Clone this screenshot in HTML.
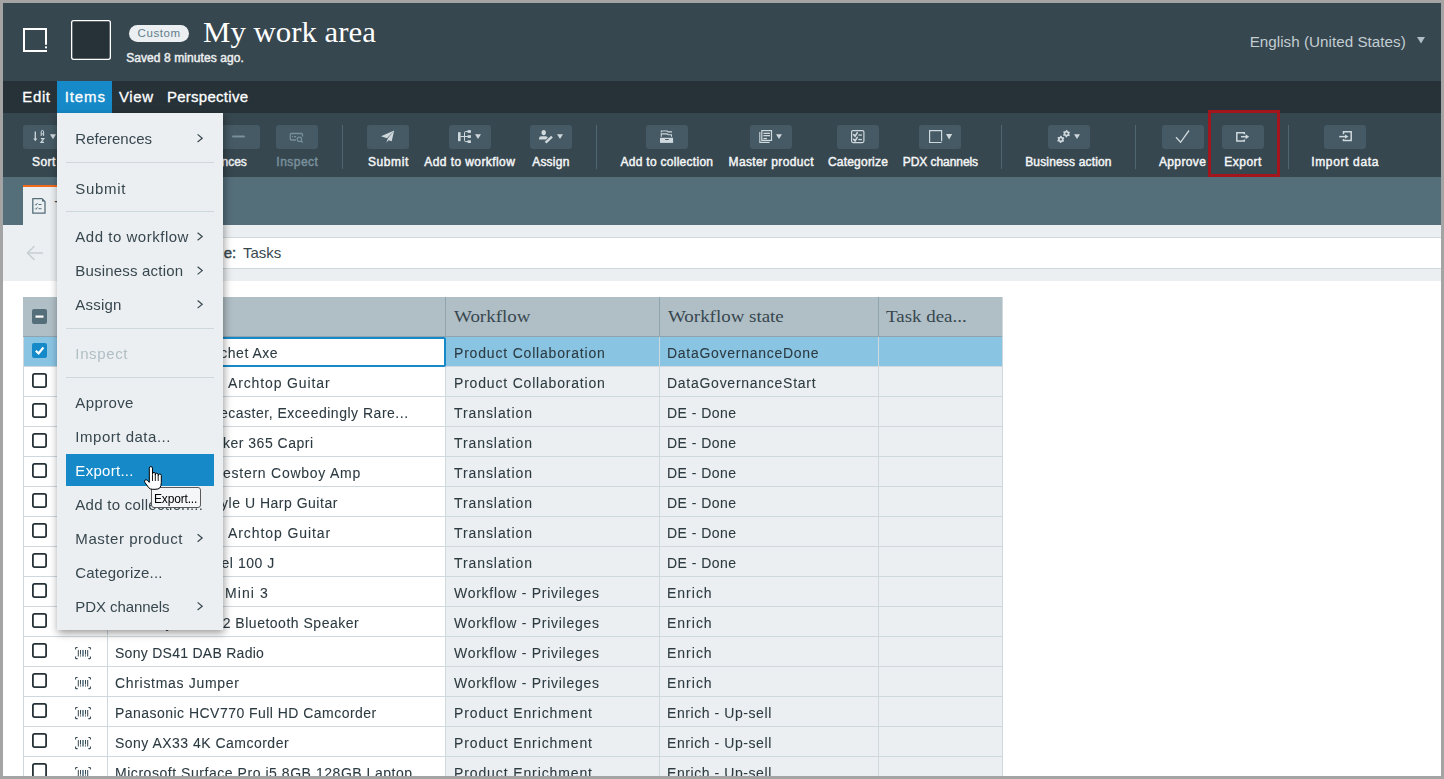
<!DOCTYPE html>
<html><head><meta charset="utf-8"><title>My work area</title>
<style>
html,body{margin:0;padding:0;}
body{width:1444px;height:779px;overflow:hidden;position:relative;background:#a4a4a4;font-family:"Liberation Sans",sans-serif;}
.r{position:absolute;}
.t{position:absolute;white-space:nowrap;line-height:1;}
.ov{position:absolute;left:0;top:0;}
</style></head><body>
<div class='r' style='left:3px;top:3px;width:1438px;height:78px;background:#37474f;'></div><div class='r' style='left:129px;top:25px;width:60px;height:17px;background:#eceff1;border-radius:9px'></div><div class='r' style='left:3px;top:81px;width:1438px;height:32px;background:#263238;'></div><div class='r' style='left:57px;top:81px;width:55px;height:32px;background:#168ac9;'></div><div class='r' style='left:3px;top:113px;width:1438px;height:64px;background:#37474f;'></div><div class='r' style='left:23px;top:125px;width:42px;height:24px;background:#455a64;border-radius:3px'></div><div class='r' style='left:218px;top:125px;width:42px;height:24px;background:#455a64;border-radius:3px'></div><div class='r' style='left:276px;top:125px;width:42px;height:24px;background:#455a64;border-radius:3px'></div><div class='r' style='left:367px;top:125px;width:42px;height:24px;background:#455a64;border-radius:3px'></div><div class='r' style='left:449px;top:125px;width:42px;height:24px;background:#455a64;border-radius:3px'></div><div class='r' style='left:530px;top:125px;width:42px;height:24px;background:#455a64;border-radius:3px'></div><div class='r' style='left:646px;top:125px;width:42px;height:24px;background:#455a64;border-radius:3px'></div><div class='r' style='left:750px;top:125px;width:42px;height:24px;background:#455a64;border-radius:3px'></div><div class='r' style='left:837px;top:125px;width:42px;height:24px;background:#455a64;border-radius:3px'></div><div class='r' style='left:919px;top:125px;width:42px;height:24px;background:#455a64;border-radius:3px'></div><div class='r' style='left:1048px;top:125px;width:42px;height:24px;background:#455a64;border-radius:3px'></div><div class='r' style='left:1162px;top:125px;width:42px;height:24px;background:#455a64;border-radius:3px'></div><div class='r' style='left:1222px;top:125px;width:42px;height:24px;background:#455a64;border-radius:3px'></div><div class='r' style='left:1324px;top:125px;width:42px;height:24px;background:#455a64;border-radius:3px'></div><div class='r' style='left:342px;top:125px;width:1px;height:44px;background:#4f6570;'></div><div class='r' style='left:596px;top:125px;width:1px;height:44px;background:#4f6570;'></div><div class='r' style='left:1001px;top:125px;width:1px;height:44px;background:#4f6570;'></div><div class='r' style='left:1135px;top:125px;width:1px;height:44px;background:#4f6570;'></div><div class='r' style='left:1288px;top:125px;width:1px;height:44px;background:#4f6570;'></div><div class='r' style='left:1208px;top:110px;width:72px;height:67px;background:transparent;border:3px solid #a3151d;box-sizing:border-box'></div><div class='r' style='left:3px;top:177px;width:1438px;height:48px;background:#546e7a;'></div><div class='r' style='left:23px;top:185px;width:177px;height:40px;background:#eceff1;border-top:2px solid #f26a1b;box-sizing:border-box'></div><div class='r' style='left:3px;top:225px;width:1438px;height:56px;background:#eceff1;'></div><div class='r' style='left:60px;top:237px;width:1381px;height:32px;background:#ffffff;border-top:1px solid #cfd8dc;border-bottom:1px solid #cfd8dc;box-sizing:border-box'></div><div class='r' style='left:3px;top:281px;width:1438px;height:495px;background:#ffffff;'></div><div class='r' style='left:23px;top:297px;width:980px;height:40px;background:#b0bec5;border-bottom:1px solid #90a4ae;box-sizing:border-box'></div><div class='r' style='left:107px;top:297px;width:1px;height:40px;background:#90a4ae;'></div><div class='r' style='left:445px;top:297px;width:1px;height:40px;background:#90a4ae;'></div><div class='r' style='left:659px;top:297px;width:1px;height:40px;background:#90a4ae;'></div><div class='r' style='left:878px;top:297px;width:1px;height:40px;background:#90a4ae;'></div><div class='r' style='left:23px;top:337px;width:980px;height:30px;background:#89c4e3;border-bottom:1px solid #cfd8dc;box-sizing:border-box'></div><div class='r' style='left:107px;top:337px;width:339px;height:30px;background:#ffffff;border:2px solid #168ac9;border-radius:2px;box-sizing:border-box'></div><div class='r' style='left:23px;top:367px;width:422px;height:30px;background:#ffffff;border-bottom:1px solid #cfd8dc;box-sizing:border-box'></div><div class='r' style='left:445px;top:367px;width:558px;height:30px;background:#eceff1;border-bottom:1px solid #cfd8dc;box-sizing:border-box'></div><div class='r' style='left:23px;top:397px;width:422px;height:30px;background:#ffffff;border-bottom:1px solid #cfd8dc;box-sizing:border-box'></div><div class='r' style='left:445px;top:397px;width:558px;height:30px;background:#eceff1;border-bottom:1px solid #cfd8dc;box-sizing:border-box'></div><div class='r' style='left:23px;top:427px;width:422px;height:30px;background:#ffffff;border-bottom:1px solid #cfd8dc;box-sizing:border-box'></div><div class='r' style='left:445px;top:427px;width:558px;height:30px;background:#eceff1;border-bottom:1px solid #cfd8dc;box-sizing:border-box'></div><div class='r' style='left:23px;top:457px;width:422px;height:30px;background:#ffffff;border-bottom:1px solid #cfd8dc;box-sizing:border-box'></div><div class='r' style='left:445px;top:457px;width:558px;height:30px;background:#eceff1;border-bottom:1px solid #cfd8dc;box-sizing:border-box'></div><div class='r' style='left:23px;top:487px;width:422px;height:30px;background:#ffffff;border-bottom:1px solid #cfd8dc;box-sizing:border-box'></div><div class='r' style='left:445px;top:487px;width:558px;height:30px;background:#eceff1;border-bottom:1px solid #cfd8dc;box-sizing:border-box'></div><div class='r' style='left:23px;top:517px;width:422px;height:30px;background:#ffffff;border-bottom:1px solid #cfd8dc;box-sizing:border-box'></div><div class='r' style='left:445px;top:517px;width:558px;height:30px;background:#eceff1;border-bottom:1px solid #cfd8dc;box-sizing:border-box'></div><div class='r' style='left:23px;top:547px;width:422px;height:30px;background:#ffffff;border-bottom:1px solid #cfd8dc;box-sizing:border-box'></div><div class='r' style='left:445px;top:547px;width:558px;height:30px;background:#eceff1;border-bottom:1px solid #cfd8dc;box-sizing:border-box'></div><div class='r' style='left:23px;top:577px;width:422px;height:30px;background:#ffffff;border-bottom:1px solid #cfd8dc;box-sizing:border-box'></div><div class='r' style='left:445px;top:577px;width:558px;height:30px;background:#eceff1;border-bottom:1px solid #cfd8dc;box-sizing:border-box'></div><div class='r' style='left:23px;top:607px;width:422px;height:30px;background:#ffffff;border-bottom:1px solid #cfd8dc;box-sizing:border-box'></div><div class='r' style='left:445px;top:607px;width:558px;height:30px;background:#eceff1;border-bottom:1px solid #cfd8dc;box-sizing:border-box'></div><div class='r' style='left:23px;top:637px;width:422px;height:30px;background:#ffffff;border-bottom:1px solid #cfd8dc;box-sizing:border-box'></div><div class='r' style='left:445px;top:637px;width:558px;height:30px;background:#eceff1;border-bottom:1px solid #cfd8dc;box-sizing:border-box'></div><div class='r' style='left:23px;top:667px;width:422px;height:30px;background:#ffffff;border-bottom:1px solid #cfd8dc;box-sizing:border-box'></div><div class='r' style='left:445px;top:667px;width:558px;height:30px;background:#eceff1;border-bottom:1px solid #cfd8dc;box-sizing:border-box'></div><div class='r' style='left:23px;top:697px;width:422px;height:30px;background:#ffffff;border-bottom:1px solid #cfd8dc;box-sizing:border-box'></div><div class='r' style='left:445px;top:697px;width:558px;height:30px;background:#eceff1;border-bottom:1px solid #cfd8dc;box-sizing:border-box'></div><div class='r' style='left:23px;top:727px;width:422px;height:30px;background:#ffffff;border-bottom:1px solid #cfd8dc;box-sizing:border-box'></div><div class='r' style='left:445px;top:727px;width:558px;height:30px;background:#eceff1;border-bottom:1px solid #cfd8dc;box-sizing:border-box'></div><div class='r' style='left:23px;top:757px;width:422px;height:30px;background:#ffffff;border-bottom:1px solid #cfd8dc;box-sizing:border-box'></div><div class='r' style='left:445px;top:757px;width:558px;height:30px;background:#eceff1;border-bottom:1px solid #cfd8dc;box-sizing:border-box'></div><div class='r' style='left:23px;top:337px;width:1px;height:439px;background:#cfd8dc;'></div><div class='r' style='left:107px;top:367px;width:1px;height:409px;background:#cfd8dc;'></div><div class='r' style='left:445px;top:367px;width:1px;height:409px;background:#cfd8dc;'></div><div class='r' style='left:659px;top:337px;width:1px;height:439px;background:#cfd8dc;'></div><div class='r' style='left:878px;top:337px;width:1px;height:439px;background:#cfd8dc;'></div><div class='r' style='left:1002px;top:297px;width:1px;height:479px;background:#cfd8dc;'></div>
<div class='t' style='left:137.59px;top:27.77px;font-family:"Liberation Sans",sans-serif;font-size:11.5px;font-weight:400;color:#607d8b;letter-spacing:0.597px'>Custom</div><div class='t' style='left:203.06px;top:18.73px;font-family:"Liberation Serif",serif;font-size:28.5px;font-weight:400;color:#ffffff;letter-spacing:0.000px;transform:scaleX(1.0813);transform-origin:0 0'>My work area</div><div class='t' style='left:126.16px;top:51.94px;font-family:"Liberation Sans",sans-serif;font-size:12px;font-weight:400;color:#eceff1;letter-spacing:0.084px;-webkit-text-stroke:0.45px #eceff1'>Saved 8 minutes ago.</div><div class='t' style='left:1249.64px;top:33.73px;font-family:"Liberation Sans",sans-serif;font-size:15.2px;font-weight:400;color:#c3ced3;letter-spacing:0.036px'>English (United States)</div><div class='t' style='left:22.35px;top:89.30px;font-family:"Liberation Sans",sans-serif;font-size:15px;font-weight:400;color:#ffffff;letter-spacing:0.614px;-webkit-text-stroke:0.3px #ffffff'>Edit</div><div class='t' style='left:64.65px;top:89.30px;font-family:"Liberation Sans",sans-serif;font-size:15px;font-weight:400;color:#ffffff;letter-spacing:0.928px;-webkit-text-stroke:0.3px #ffffff'>Items</div><div class='t' style='left:118.95px;top:89.30px;font-family:"Liberation Sans",sans-serif;font-size:15px;font-weight:400;color:#ffffff;letter-spacing:0.617px;-webkit-text-stroke:0.3px #ffffff'>View</div><div class='t' style='left:166.95px;top:89.30px;font-family:"Liberation Sans",sans-serif;font-size:15px;font-weight:400;color:#ffffff;letter-spacing:0.272px;-webkit-text-stroke:0.3px #ffffff'>Perspective</div><div class='t' style='left:32.06px;top:155.94px;font-family:"Liberation Sans",sans-serif;font-size:12px;font-weight:400;color:#f3f5f6;letter-spacing:0.388px;-webkit-text-stroke:0.45px #f3f5f6'>Sort</div><div class='t' style='left:276.36px;top:155.94px;font-family:"Liberation Sans",sans-serif;font-size:12px;font-weight:400;color:#78909c;letter-spacing:0.463px;-webkit-text-stroke:0.45px #78909c'>Inspect</div><div class='t' style='left:368.06px;top:155.94px;font-family:"Liberation Sans",sans-serif;font-size:12px;font-weight:400;color:#f3f5f6;letter-spacing:0.564px;-webkit-text-stroke:0.45px #f3f5f6'>Submit</div><div class='t' style='left:424.36px;top:155.94px;font-family:"Liberation Sans",sans-serif;font-size:12px;font-weight:400;color:#f3f5f6;letter-spacing:0.413px;-webkit-text-stroke:0.45px #f3f5f6'>Add to workflow</div><div class='t' style='left:532.16px;top:155.94px;font-family:"Liberation Sans",sans-serif;font-size:12px;font-weight:400;color:#f3f5f6;letter-spacing:0.230px;-webkit-text-stroke:0.45px #f3f5f6'>Assign</div><div class='t' style='left:620.46px;top:155.94px;font-family:"Liberation Sans",sans-serif;font-size:12px;font-weight:400;color:#f3f5f6;letter-spacing:0.282px;-webkit-text-stroke:0.45px #f3f5f6'>Add to collection</div><div class='t' style='left:728.56px;top:155.94px;font-family:"Liberation Sans",sans-serif;font-size:12px;font-weight:400;color:#f3f5f6;letter-spacing:0.379px;-webkit-text-stroke:0.45px #f3f5f6'>Master product</div><div class='t' style='left:827.96px;top:155.94px;font-family:"Liberation Sans",sans-serif;font-size:12px;font-weight:400;color:#f3f5f6;letter-spacing:0.205px;-webkit-text-stroke:0.45px #f3f5f6'>Categorize</div><div class='t' style='left:902.76px;top:155.94px;font-family:"Liberation Sans",sans-serif;font-size:12px;font-weight:400;color:#f3f5f6;letter-spacing:-0.061px;-webkit-text-stroke:0.45px #f3f5f6'>PDX channels</div><div class='t' style='left:1025.16px;top:155.94px;font-family:"Liberation Sans",sans-serif;font-size:12px;font-weight:400;color:#f3f5f6;letter-spacing:0.167px;-webkit-text-stroke:0.45px #f3f5f6'>Business action</div><div class='t' style='left:1158.96px;top:155.94px;font-family:"Liberation Sans",sans-serif;font-size:12px;font-weight:400;color:#f3f5f6;letter-spacing:0.363px;-webkit-text-stroke:0.45px #f3f5f6'>Approve</div><div class='t' style='left:1224.16px;top:155.94px;font-family:"Liberation Sans",sans-serif;font-size:12px;font-weight:400;color:#f3f5f6;letter-spacing:0.519px;-webkit-text-stroke:0.45px #f3f5f6'>Export</div><div class='t' style='left:1311.16px;top:155.94px;font-family:"Liberation Sans",sans-serif;font-size:12px;font-weight:400;color:#f3f5f6;letter-spacing:0.658px;-webkit-text-stroke:0.45px #f3f5f6'>Import data</div><div class='t' style='left:185.47px;top:155.94px;font-family:"Liberation Sans",sans-serif;font-size:12px;font-weight:400;color:#eceff1;letter-spacing:0.000px;-webkit-text-stroke:0.45px #eceff1'>References</div><div class='t' style='left:223.63px;top:245.30px;font-family:"Liberation Sans",sans-serif;font-size:15px;font-weight:400;color:#3c4b53;letter-spacing:0.000px;-webkit-text-stroke:0.45px #3c4b53'>e:</div><div class='t' style='left:243.05px;top:245.30px;font-family:"Liberation Sans",sans-serif;font-size:15px;font-weight:400;color:#37474f;letter-spacing:-0.011px'>Tasks</div><div class='t' style='left:54.45px;top:198.30px;font-family:"Liberation Sans",sans-serif;font-size:15px;font-weight:400;color:#37474f;letter-spacing:0.000px'>Tasks</div><div class='t' style='left:453.95px;top:308.14px;font-family:"Liberation Serif",serif;font-size:17.5px;font-weight:400;color:#37474f;letter-spacing:0.000px;transform:scaleX(1.0839);transform-origin:0 0'>Workflow</div><div class='t' style='left:668.15px;top:308.14px;font-family:"Liberation Serif",serif;font-size:17.5px;font-weight:400;color:#37474f;letter-spacing:0.000px;transform:scaleX(1.0821);transform-origin:0 0'>Workflow state</div><div class='t' style='left:886.45px;top:308.14px;font-family:"Liberation Serif",serif;font-size:17.5px;font-weight:400;color:#37474f;letter-spacing:0.000px;transform:scaleX(1.0825);transform-origin:0 0'>Task dea...</div><div class='t' style='left:196.69px;top:346.25px;font-family:"Liberation Sans",sans-serif;font-size:14px;font-weight:400;color:#2c3a41;letter-spacing:0.509px;will-change:transform;-webkit-text-stroke:0.08px #2c3a41'>Hatchet Axe</div><div class='t' style='left:453.52px;top:346.25px;font-family:"Liberation Sans",sans-serif;font-size:14px;font-weight:400;color:#2c3a41;letter-spacing:0.811px;will-change:transform;-webkit-text-stroke:0.08px #2c3a41'>Product Collaboration</div><div class='t' style='left:667.42px;top:346.25px;font-family:"Liberation Sans",sans-serif;font-size:14px;font-weight:400;color:#2c3a41;letter-spacing:0.726px;will-change:transform;-webkit-text-stroke:0.08px #2c3a41'>DataGovernanceDone</div><div class='t' style='left:228.42px;top:376.25px;font-family:"Liberation Sans",sans-serif;font-size:14px;font-weight:400;color:#2c3a41;letter-spacing:0.869px;will-change:transform;-webkit-text-stroke:0.08px #2c3a41'>Archtop Guitar</div><div class='t' style='left:453.52px;top:376.25px;font-family:"Liberation Sans",sans-serif;font-size:14px;font-weight:400;color:#2c3a41;letter-spacing:0.811px;will-change:transform;-webkit-text-stroke:0.08px #2c3a41'>Product Collaboration</div><div class='t' style='left:667.42px;top:376.25px;font-family:"Liberation Sans",sans-serif;font-size:14px;font-weight:400;color:#2c3a41;letter-spacing:0.731px;will-change:transform;-webkit-text-stroke:0.08px #2c3a41'>DataGovernanceStart</div><div class='t' style='left:148.66px;top:406.25px;font-family:"Liberation Sans",sans-serif;font-size:14px;font-weight:400;color:#2c3a41;letter-spacing:0.509px;will-change:transform;-webkit-text-stroke:0.08px #2c3a41'>Fender Telecaster, Exceedingly Rare...</div><div class='t' style='left:453.52px;top:406.25px;font-family:"Liberation Sans",sans-serif;font-size:14px;font-weight:400;color:#2c3a41;letter-spacing:0.921px;will-change:transform;-webkit-text-stroke:0.08px #2c3a41'>Translation</div><div class='t' style='left:667.42px;top:406.25px;font-family:"Liberation Sans",sans-serif;font-size:14px;font-weight:400;color:#2c3a41;letter-spacing:0.450px;will-change:transform;-webkit-text-stroke:0.08px #2c3a41'>DE - Done</div><div class='t' style='left:153.19px;top:436.25px;font-family:"Liberation Sans",sans-serif;font-size:14px;font-weight:400;color:#2c3a41;letter-spacing:0.509px;will-change:transform;-webkit-text-stroke:0.08px #2c3a41'>Rickenbacker 365 Capri</div><div class='t' style='left:453.52px;top:436.25px;font-family:"Liberation Sans",sans-serif;font-size:14px;font-weight:400;color:#2c3a41;letter-spacing:0.921px;will-change:transform;-webkit-text-stroke:0.08px #2c3a41'>Translation</div><div class='t' style='left:667.42px;top:436.25px;font-family:"Liberation Sans",sans-serif;font-size:14px;font-weight:400;color:#2c3a41;letter-spacing:0.450px;will-change:transform;-webkit-text-stroke:0.08px #2c3a41'>DE - Done</div><div class='t' style='left:223.22px;top:466.25px;font-family:"Liberation Sans",sans-serif;font-size:14px;font-weight:400;color:#2c3a41;letter-spacing:0.748px;will-change:transform;-webkit-text-stroke:0.08px #2c3a41'>estern Cowboy Amp</div><div class='t' style='left:453.52px;top:466.25px;font-family:"Liberation Sans",sans-serif;font-size:14px;font-weight:400;color:#2c3a41;letter-spacing:0.921px;will-change:transform;-webkit-text-stroke:0.08px #2c3a41'>Translation</div><div class='t' style='left:667.42px;top:466.25px;font-family:"Liberation Sans",sans-serif;font-size:14px;font-weight:400;color:#2c3a41;letter-spacing:0.450px;will-change:transform;-webkit-text-stroke:0.08px #2c3a41'>DE - Done</div><div class='t' style='left:155.44px;top:496.25px;font-family:"Liberation Sans",sans-serif;font-size:14px;font-weight:400;color:#2c3a41;letter-spacing:0.509px;will-change:transform;-webkit-text-stroke:0.08px #2c3a41'>Gibson Style U Harp Guitar</div><div class='t' style='left:453.52px;top:496.25px;font-family:"Liberation Sans",sans-serif;font-size:14px;font-weight:400;color:#2c3a41;letter-spacing:0.921px;will-change:transform;-webkit-text-stroke:0.08px #2c3a41'>Translation</div><div class='t' style='left:667.42px;top:496.25px;font-family:"Liberation Sans",sans-serif;font-size:14px;font-weight:400;color:#2c3a41;letter-spacing:0.450px;will-change:transform;-webkit-text-stroke:0.08px #2c3a41'>DE - Done</div><div class='t' style='left:228.32px;top:526.25px;font-family:"Liberation Sans",sans-serif;font-size:14px;font-weight:400;color:#2c3a41;letter-spacing:0.907px;will-change:transform;-webkit-text-stroke:0.08px #2c3a41'>Archtop Guitar</div><div class='t' style='left:453.52px;top:526.25px;font-family:"Liberation Sans",sans-serif;font-size:14px;font-weight:400;color:#2c3a41;letter-spacing:0.921px;will-change:transform;-webkit-text-stroke:0.08px #2c3a41'>Translation</div><div class='t' style='left:667.42px;top:526.25px;font-family:"Liberation Sans",sans-serif;font-size:14px;font-weight:400;color:#2c3a41;letter-spacing:0.450px;will-change:transform;-webkit-text-stroke:0.08px #2c3a41'>DE - Done</div><div class='t' style='left:140.50px;top:556.25px;font-family:"Liberation Sans",sans-serif;font-size:14px;font-weight:400;color:#2c3a41;letter-spacing:0.509px;will-change:transform;-webkit-text-stroke:0.08px #2c3a41'>Fender Model 100 J</div><div class='t' style='left:453.52px;top:556.25px;font-family:"Liberation Sans",sans-serif;font-size:14px;font-weight:400;color:#2c3a41;letter-spacing:0.921px;will-change:transform;-webkit-text-stroke:0.08px #2c3a41'>Translation</div><div class='t' style='left:667.42px;top:556.25px;font-family:"Liberation Sans",sans-serif;font-size:14px;font-weight:400;color:#2c3a41;letter-spacing:0.450px;will-change:transform;-webkit-text-stroke:0.08px #2c3a41'>DE - Done</div><div class='t' style='left:225.32px;top:586.25px;font-family:"Liberation Sans",sans-serif;font-size:14px;font-weight:400;color:#2c3a41;letter-spacing:1.080px;will-change:transform;-webkit-text-stroke:0.08px #2c3a41'>Mini 3</div><div class='t' style='left:453.52px;top:586.25px;font-family:"Liberation Sans",sans-serif;font-size:14px;font-weight:400;color:#2c3a41;letter-spacing:0.726px;will-change:transform;-webkit-text-stroke:0.08px #2c3a41'>Workflow - Privileges</div><div class='t' style='left:667.42px;top:586.25px;font-family:"Liberation Sans",sans-serif;font-size:14px;font-weight:400;color:#2c3a41;letter-spacing:0.995px;will-change:transform;-webkit-text-stroke:0.08px #2c3a41'>Enrich</div><div class='t' style='left:138.57px;top:616.25px;font-family:"Liberation Sans",sans-serif;font-size:14px;font-weight:400;color:#2c3a41;letter-spacing:0.509px;will-change:transform;-webkit-text-stroke:0.08px #2c3a41'>Sony SRS-X2 Bluetooth Speaker</div><div class='t' style='left:453.52px;top:616.25px;font-family:"Liberation Sans",sans-serif;font-size:14px;font-weight:400;color:#2c3a41;letter-spacing:0.726px;will-change:transform;-webkit-text-stroke:0.08px #2c3a41'>Workflow - Privileges</div><div class='t' style='left:667.42px;top:616.25px;font-family:"Liberation Sans",sans-serif;font-size:14px;font-weight:400;color:#2c3a41;letter-spacing:0.995px;will-change:transform;-webkit-text-stroke:0.08px #2c3a41'>Enrich</div><div class='t' style='left:115.42px;top:646.25px;font-family:"Liberation Sans",sans-serif;font-size:14px;font-weight:400;color:#2c3a41;letter-spacing:0.272px;will-change:transform;-webkit-text-stroke:0.08px #2c3a41'>Sony DS41 DAB Radio</div><div class='t' style='left:453.52px;top:646.25px;font-family:"Liberation Sans",sans-serif;font-size:14px;font-weight:400;color:#2c3a41;letter-spacing:0.726px;will-change:transform;-webkit-text-stroke:0.08px #2c3a41'>Workflow - Privileges</div><div class='t' style='left:667.42px;top:646.25px;font-family:"Liberation Sans",sans-serif;font-size:14px;font-weight:400;color:#2c3a41;letter-spacing:0.995px;will-change:transform;-webkit-text-stroke:0.08px #2c3a41'>Enrich</div><div class='t' style='left:115.42px;top:676.25px;font-family:"Liberation Sans",sans-serif;font-size:14px;font-weight:400;color:#2c3a41;letter-spacing:0.684px;will-change:transform;-webkit-text-stroke:0.08px #2c3a41'>Christmas Jumper</div><div class='t' style='left:453.52px;top:676.25px;font-family:"Liberation Sans",sans-serif;font-size:14px;font-weight:400;color:#2c3a41;letter-spacing:0.726px;will-change:transform;-webkit-text-stroke:0.08px #2c3a41'>Workflow - Privileges</div><div class='t' style='left:667.42px;top:676.25px;font-family:"Liberation Sans",sans-serif;font-size:14px;font-weight:400;color:#2c3a41;letter-spacing:0.995px;will-change:transform;-webkit-text-stroke:0.08px #2c3a41'>Enrich</div><div class='t' style='left:115.42px;top:706.25px;font-family:"Liberation Sans",sans-serif;font-size:14px;font-weight:400;color:#2c3a41;letter-spacing:0.466px;will-change:transform;-webkit-text-stroke:0.08px #2c3a41'>Panasonic HCV770 Full HD Camcorder</div><div class='t' style='left:453.52px;top:706.25px;font-family:"Liberation Sans",sans-serif;font-size:14px;font-weight:400;color:#2c3a41;letter-spacing:0.883px;will-change:transform;-webkit-text-stroke:0.08px #2c3a41'>Product Enrichment</div><div class='t' style='left:667.42px;top:706.25px;font-family:"Liberation Sans",sans-serif;font-size:14px;font-weight:400;color:#2c3a41;letter-spacing:0.570px;will-change:transform;-webkit-text-stroke:0.08px #2c3a41'>Enrich - Up-sell</div><div class='t' style='left:115.42px;top:736.25px;font-family:"Liberation Sans",sans-serif;font-size:14px;font-weight:400;color:#2c3a41;letter-spacing:0.483px;will-change:transform;-webkit-text-stroke:0.08px #2c3a41'>Sony AX33 4K Camcorder</div><div class='t' style='left:453.52px;top:736.25px;font-family:"Liberation Sans",sans-serif;font-size:14px;font-weight:400;color:#2c3a41;letter-spacing:0.883px;will-change:transform;-webkit-text-stroke:0.08px #2c3a41'>Product Enrichment</div><div class='t' style='left:667.42px;top:736.25px;font-family:"Liberation Sans",sans-serif;font-size:14px;font-weight:400;color:#2c3a41;letter-spacing:0.570px;will-change:transform;-webkit-text-stroke:0.08px #2c3a41'>Enrich - Up-sell</div><div class='t' style='left:115.42px;top:766.25px;font-family:"Liberation Sans",sans-serif;font-size:14px;font-weight:400;color:#2c3a41;letter-spacing:0.542px;will-change:transform;-webkit-text-stroke:0.08px #2c3a41'>Microsoft Surface Pro i5 8GB 128GB Laptop</div><div class='t' style='left:453.52px;top:766.25px;font-family:"Liberation Sans",sans-serif;font-size:14px;font-weight:400;color:#2c3a41;letter-spacing:0.883px;will-change:transform;-webkit-text-stroke:0.08px #2c3a41'>Product Enrichment</div><div class='t' style='left:667.42px;top:766.25px;font-family:"Liberation Sans",sans-serif;font-size:14px;font-weight:400;color:#2c3a41;letter-spacing:0.570px;will-change:transform;-webkit-text-stroke:0.08px #2c3a41'>Enrich - Up-sell</div>
<svg class='ov' width='1444' height='779' viewBox='0 0 1444 779'><path d='M46 44.7V29H24V51H47' fill='none' stroke='#fff' stroke-width='2'/><rect x='45' y='46.4' width='2' height='1.9' fill='#fff'/><rect x='71.65' y='20.65' width='38.7' height='38.7' rx='2' fill='#263238' stroke='#fff' stroke-width='1.3'/><path d='M1417 37H1425L1421.0 43.5Z' fill='#b0bec5'/><path d='M35.3 131.4V140' stroke='#cfd8dc' stroke-width='1.3'/><path d='M33.3 138.6H37.3L35.3 141.2Z' fill='#cfd8dc'/><path d='M41.2 136V132Q41.2 130.4 42.4 130.4Q43.6 130.4 43.6 132V136 M41.2 133.9H43.6' fill='none' stroke='#cfd8dc' stroke-width='1'/><path d='M40.9 138.6H43.8L41 142.4H44' fill='none' stroke='#cfd8dc' stroke-width='1.2'/><path d='M50 134.2H56L53.0 139.2Z' fill='#cfd8dc'/><rect x='232' y='135.5' width='13' height='2' rx='1' fill='#78909c'/><path d='M302.5 136.5V134.5Q302.5 133.5 301.5 133.5H291.3Q290.3 133.5 290.3 134.5V139Q290.3 140 291.3 140H296' fill='none' stroke='#78909c' stroke-width='1.3'/><circle cx='299.4' cy='139.3' r='2.2' fill='none' stroke='#78909c' stroke-width='1.2'/><path d='M301 141L302.8 142.6' stroke='#78909c' stroke-width='1.3'/><rect x='292' y='136' width='1' height='1.3' fill='#78909c'/><rect x='294' y='136' width='2.2' height='1.3' fill='#78909c'/><path d='M394.2 130.6L381 136.3L387 138.2Z M394.2 130.6L387.8 138.6L386.3 142.8L388.6 140.2L391.7 141.2Z' fill='#cfd8dc'/><rect x='458' y='132.2' width='2.6' height='9' fill='#cfd8dc'/><path d='M460.5 136.5H468 M468 131.5H465.8Q464.5 131.5 464.5 132.8V140.3Q464.5 141.6 465.8 141.6H468' fill='none' stroke='#cfd8dc' stroke-width='1'/><rect x='467.6' y='130.1' width='3.3' height='2.8' fill='#cfd8dc'/><rect x='467.6' y='135.2' width='3.3' height='2.7' fill='#cfd8dc'/><rect x='467.6' y='140.3' width='3.3' height='2.7' fill='#cfd8dc'/><path d='M475 134.2H481L478.0 139.1Z' fill='#cfd8dc'/><ellipse cx='543.7' cy='132.6' rx='2.2' ry='2.7' fill='#cfd8dc'/><path d='M539 139.6V138.3Q539 136.4 541.5 136.3H545.6Q547.6 136.4 547.8 137.6L546 139.6Z' fill='#cfd8dc'/><path d='M545.6 142.6L552 136.6' stroke='#cfd8dc' stroke-width='2.4'/><path d='M557 134.2H563L560.0 139.1Z' fill='#cfd8dc'/><rect x='660' y='137.8' width='13.1' height='5.1' fill='#cfd8dc'/><rect x='665' y='139' width='3.9' height='1.1' rx='.5' fill='#455a64'/><path d='M661.3 136.8V133.9H667.2L668 134.8H671.5V136.8 M661.3 132.6V131H667.2L668 131.9H671.5V132.6' fill='none' stroke='#cfd8dc' stroke-width='1.1'/><rect x='761.8' y='130.6' width='9.7' height='9.8' fill='none' stroke='#cfd8dc' stroke-width='1.2'/><path d='M759.8 132V142.4H769.6' fill='none' stroke='#cfd8dc' stroke-width='1.1'/><rect x='763.4' y='132.7' width='6.6' height='1.3' fill='#cfd8dc'/><rect x='763.4' y='135' width='6.6' height='1.3' fill='#cfd8dc'/><rect x='763.4' y='137.9' width='3.6' height='1.3' fill='#cfd8dc'/><path d='M776 134.2H782L779.0 139.1Z' fill='#cfd8dc'/><rect x='851.6' y='130.6' width='12.3' height='12' rx='1.5' fill='none' stroke='#cfd8dc' stroke-width='1.2'/><path d='M853.7 134.6L855.1 136.1L857.3 132.6 M853.7 139.4L855.1 140.9L857.3 137.4' fill='none' stroke='#cfd8dc' stroke-width='1.6' stroke-linecap='round'/><rect x='858.3' y='134.4' width='3.6' height='1.3' fill='#cfd8dc'/><rect x='858.3' y='138.9' width='3.6' height='1.3' fill='#cfd8dc'/><path d='M941.6 141.2V130.6H929.6V142.5H941.6' fill='none' stroke='#cfd8dc' stroke-width='1.2'/><path d='M946 134.1H952.2L949.1 139.5Z' fill='#cfd8dc'/><path d='M1060.56 135.71 L1061.52 135.77 L1062.04 136.89 L1062.65 137.29 L1063.88 137.34 L1064.30 138.21 L1063.59 139.22 L1063.55 139.95 L1064.12 141.04 L1063.58 141.84 L1062.36 141.73 L1061.70 142.05 L1061.04 143.09 L1060.08 143.03 L1059.56 141.91 L1058.95 141.51 L1057.72 141.46 L1057.30 140.59 L1058.01 139.58 L1058.05 138.85 L1057.48 137.76 L1058.02 136.96 L1059.24 137.07 L1059.90 136.75Z M1061.8999999999999 139.4 A1.1 1.1 0 1 0 1059.7 139.4 A1.1 1.1 0 1 0 1061.8999999999999 139.4Z' fill='#cfd8dc' fill-rule='evenodd'/><path d='M1066.26 130.01 L1067.22 130.07 L1067.74 131.19 L1068.35 131.59 L1069.58 131.64 L1070.00 132.51 L1069.29 133.52 L1069.25 134.25 L1069.82 135.34 L1069.28 136.14 L1068.06 136.03 L1067.40 136.35 L1066.74 137.39 L1065.78 137.33 L1065.26 136.21 L1064.65 135.81 L1063.42 135.76 L1063.00 134.89 L1063.71 133.88 L1063.75 133.15 L1063.18 132.06 L1063.72 131.26 L1064.94 131.37 L1065.60 131.05Z M1067.6 133.7 A1.1 1.1 0 1 0 1065.4 133.7 A1.1 1.1 0 1 0 1067.6 133.7Z' fill='#cfd8dc' fill-rule='evenodd'/><path d='M1074 134.2H1080L1077.0 139.1Z' fill='#cfd8dc'/><path d='M1176 137.3L1180.6 142.3L1189 130.5' fill='none' stroke='#cfd8dc' stroke-width='1.3'/><path d='M1244.3 134.2V132.8H1236.8V141H1244.3V139.4' fill='none' stroke='#cfd8dc' stroke-width='1.5'/><path d='M1241 136.7H1246.5' stroke='#cfd8dc' stroke-width='1.5'/><path d='M1245.6 134.2L1249.2 136.7L1245.6 139.2Z' fill='#cfd8dc'/><path d='M1343.5 134.2V131.8H1351.2V140.6H1343.5V139' fill='none' stroke='#cfd8dc' stroke-width='1.5'/><path d='M1339.2 136.6H1346' stroke='#cfd8dc' stroke-width='1.5'/><path d='M1345 134.4L1348.5 136.6L1345 138.8Z' fill='#cfd8dc'/><path d='M32.8 198.6H42L45 201.6V213.2H32.8Z' fill='none' stroke='#546e7a' stroke-width='1.3' stroke-linejoin='round'/><path d='M42 198.6V201.6H45' fill='#546e7a'/><path d='M35 204.2L36 205.2L37.5 203 M35 208.4L36 209.4L37.5 207.2' fill='none' stroke='#546e7a' stroke-width='.9'/><rect x='38.5' y='204' width='3' height='1' fill='#546e7a'/><rect x='38.5' y='208.2' width='3' height='1' fill='#546e7a'/><path d='M43 253H28 M34.5 246L27.5 253L34.5 260' fill='none' stroke='#c5d0d5' stroke-width='1.6'/><rect x='32' y='309' width='15' height='15' rx='2' fill='#546e7a'/><rect x='35.5' y='315.5' width='8' height='2.2' fill='#fff'/><rect x='32' y='343.0' width='15' height='15' rx='2' fill='#168ac9'/><path d='M35.8 350.8L38.6 353.4L43.4 347.5' fill='none' stroke='#fff' stroke-width='2.2'/><path d='M75.6 349.6V348.2Q75.6 347.5 76.3 347.5H77.6 M88.4 347.5H89.7Q90.4 347.5 90.4 348.2V349.6 M90.4 356.5V357.9Q90.4 358.6 89.7 358.6H88.4 M77.6 358.6H76.3Q75.6 358.6 75.6 357.9V356.5' fill='none' stroke='#37474f' stroke-width='1.1'/><rect x='77.8' y='350' width='1' height='6.5' fill='#37474f'/><rect x='80' y='350' width='1' height='4.5' fill='#37474f'/><rect x='80' y='355.4' width='1' height='1.1' fill='#37474f'/><rect x='82' y='350' width='2' height='6.5' fill='#78909c'/><rect x='85' y='350' width='1' height='4.5' fill='#37474f'/><rect x='85' y='355.4' width='1' height='1.1' fill='#37474f'/><rect x='87.2' y='350' width='1' height='6.5' fill='#37474f'/><rect x='32.9' y='373.9' width='13.2' height='13.2' rx='1.8' fill='none' stroke='#263238' stroke-width='1.8'/><path d='M75.6 379.6V378.2Q75.6 377.5 76.3 377.5H77.6 M88.4 377.5H89.7Q90.4 377.5 90.4 378.2V379.6 M90.4 386.5V387.9Q90.4 388.6 89.7 388.6H88.4 M77.6 388.6H76.3Q75.6 388.6 75.6 387.9V386.5' fill='none' stroke='#37474f' stroke-width='1.1'/><rect x='77.8' y='380' width='1' height='6.5' fill='#37474f'/><rect x='80' y='380' width='1' height='4.5' fill='#37474f'/><rect x='80' y='385.4' width='1' height='1.1' fill='#37474f'/><rect x='82' y='380' width='2' height='6.5' fill='#78909c'/><rect x='85' y='380' width='1' height='4.5' fill='#37474f'/><rect x='85' y='385.4' width='1' height='1.1' fill='#37474f'/><rect x='87.2' y='380' width='1' height='6.5' fill='#37474f'/><rect x='32.9' y='403.9' width='13.2' height='13.2' rx='1.8' fill='none' stroke='#263238' stroke-width='1.8'/><path d='M75.6 409.6V408.2Q75.6 407.5 76.3 407.5H77.6 M88.4 407.5H89.7Q90.4 407.5 90.4 408.2V409.6 M90.4 416.5V417.9Q90.4 418.6 89.7 418.6H88.4 M77.6 418.6H76.3Q75.6 418.6 75.6 417.9V416.5' fill='none' stroke='#37474f' stroke-width='1.1'/><rect x='77.8' y='410' width='1' height='6.5' fill='#37474f'/><rect x='80' y='410' width='1' height='4.5' fill='#37474f'/><rect x='80' y='415.4' width='1' height='1.1' fill='#37474f'/><rect x='82' y='410' width='2' height='6.5' fill='#78909c'/><rect x='85' y='410' width='1' height='4.5' fill='#37474f'/><rect x='85' y='415.4' width='1' height='1.1' fill='#37474f'/><rect x='87.2' y='410' width='1' height='6.5' fill='#37474f'/><rect x='32.9' y='433.9' width='13.2' height='13.2' rx='1.8' fill='none' stroke='#263238' stroke-width='1.8'/><path d='M75.6 439.6V438.2Q75.6 437.5 76.3 437.5H77.6 M88.4 437.5H89.7Q90.4 437.5 90.4 438.2V439.6 M90.4 446.5V447.9Q90.4 448.6 89.7 448.6H88.4 M77.6 448.6H76.3Q75.6 448.6 75.6 447.9V446.5' fill='none' stroke='#37474f' stroke-width='1.1'/><rect x='77.8' y='440' width='1' height='6.5' fill='#37474f'/><rect x='80' y='440' width='1' height='4.5' fill='#37474f'/><rect x='80' y='445.4' width='1' height='1.1' fill='#37474f'/><rect x='82' y='440' width='2' height='6.5' fill='#78909c'/><rect x='85' y='440' width='1' height='4.5' fill='#37474f'/><rect x='85' y='445.4' width='1' height='1.1' fill='#37474f'/><rect x='87.2' y='440' width='1' height='6.5' fill='#37474f'/><rect x='32.9' y='463.9' width='13.2' height='13.2' rx='1.8' fill='none' stroke='#263238' stroke-width='1.8'/><path d='M75.6 469.6V468.2Q75.6 467.5 76.3 467.5H77.6 M88.4 467.5H89.7Q90.4 467.5 90.4 468.2V469.6 M90.4 476.5V477.9Q90.4 478.6 89.7 478.6H88.4 M77.6 478.6H76.3Q75.6 478.6 75.6 477.9V476.5' fill='none' stroke='#37474f' stroke-width='1.1'/><rect x='77.8' y='470' width='1' height='6.5' fill='#37474f'/><rect x='80' y='470' width='1' height='4.5' fill='#37474f'/><rect x='80' y='475.4' width='1' height='1.1' fill='#37474f'/><rect x='82' y='470' width='2' height='6.5' fill='#78909c'/><rect x='85' y='470' width='1' height='4.5' fill='#37474f'/><rect x='85' y='475.4' width='1' height='1.1' fill='#37474f'/><rect x='87.2' y='470' width='1' height='6.5' fill='#37474f'/><rect x='32.9' y='493.9' width='13.2' height='13.2' rx='1.8' fill='none' stroke='#263238' stroke-width='1.8'/><path d='M75.6 499.6V498.2Q75.6 497.5 76.3 497.5H77.6 M88.4 497.5H89.7Q90.4 497.5 90.4 498.2V499.6 M90.4 506.5V507.9Q90.4 508.6 89.7 508.6H88.4 M77.6 508.6H76.3Q75.6 508.6 75.6 507.9V506.5' fill='none' stroke='#37474f' stroke-width='1.1'/><rect x='77.8' y='500' width='1' height='6.5' fill='#37474f'/><rect x='80' y='500' width='1' height='4.5' fill='#37474f'/><rect x='80' y='505.4' width='1' height='1.1' fill='#37474f'/><rect x='82' y='500' width='2' height='6.5' fill='#78909c'/><rect x='85' y='500' width='1' height='4.5' fill='#37474f'/><rect x='85' y='505.4' width='1' height='1.1' fill='#37474f'/><rect x='87.2' y='500' width='1' height='6.5' fill='#37474f'/><rect x='32.9' y='523.9' width='13.2' height='13.2' rx='1.8' fill='none' stroke='#263238' stroke-width='1.8'/><path d='M75.6 529.6V528.2Q75.6 527.5 76.3 527.5H77.6 M88.4 527.5H89.7Q90.4 527.5 90.4 528.2V529.6 M90.4 536.5V537.9Q90.4 538.6 89.7 538.6H88.4 M77.6 538.6H76.3Q75.6 538.6 75.6 537.9V536.5' fill='none' stroke='#37474f' stroke-width='1.1'/><rect x='77.8' y='530' width='1' height='6.5' fill='#37474f'/><rect x='80' y='530' width='1' height='4.5' fill='#37474f'/><rect x='80' y='535.4' width='1' height='1.1' fill='#37474f'/><rect x='82' y='530' width='2' height='6.5' fill='#78909c'/><rect x='85' y='530' width='1' height='4.5' fill='#37474f'/><rect x='85' y='535.4' width='1' height='1.1' fill='#37474f'/><rect x='87.2' y='530' width='1' height='6.5' fill='#37474f'/><rect x='32.9' y='553.9' width='13.2' height='13.2' rx='1.8' fill='none' stroke='#263238' stroke-width='1.8'/><path d='M75.6 559.6V558.2Q75.6 557.5 76.3 557.5H77.6 M88.4 557.5H89.7Q90.4 557.5 90.4 558.2V559.6 M90.4 566.5V567.9Q90.4 568.6 89.7 568.6H88.4 M77.6 568.6H76.3Q75.6 568.6 75.6 567.9V566.5' fill='none' stroke='#37474f' stroke-width='1.1'/><rect x='77.8' y='560' width='1' height='6.5' fill='#37474f'/><rect x='80' y='560' width='1' height='4.5' fill='#37474f'/><rect x='80' y='565.4' width='1' height='1.1' fill='#37474f'/><rect x='82' y='560' width='2' height='6.5' fill='#78909c'/><rect x='85' y='560' width='1' height='4.5' fill='#37474f'/><rect x='85' y='565.4' width='1' height='1.1' fill='#37474f'/><rect x='87.2' y='560' width='1' height='6.5' fill='#37474f'/><rect x='32.9' y='583.9' width='13.2' height='13.2' rx='1.8' fill='none' stroke='#263238' stroke-width='1.8'/><path d='M75.6 589.6V588.2Q75.6 587.5 76.3 587.5H77.6 M88.4 587.5H89.7Q90.4 587.5 90.4 588.2V589.6 M90.4 596.5V597.9Q90.4 598.6 89.7 598.6H88.4 M77.6 598.6H76.3Q75.6 598.6 75.6 597.9V596.5' fill='none' stroke='#37474f' stroke-width='1.1'/><rect x='77.8' y='590' width='1' height='6.5' fill='#37474f'/><rect x='80' y='590' width='1' height='4.5' fill='#37474f'/><rect x='80' y='595.4' width='1' height='1.1' fill='#37474f'/><rect x='82' y='590' width='2' height='6.5' fill='#78909c'/><rect x='85' y='590' width='1' height='4.5' fill='#37474f'/><rect x='85' y='595.4' width='1' height='1.1' fill='#37474f'/><rect x='87.2' y='590' width='1' height='6.5' fill='#37474f'/><rect x='32.9' y='613.9' width='13.2' height='13.2' rx='1.8' fill='none' stroke='#263238' stroke-width='1.8'/><path d='M75.6 619.6V618.2Q75.6 617.5 76.3 617.5H77.6 M88.4 617.5H89.7Q90.4 617.5 90.4 618.2V619.6 M90.4 626.5V627.9Q90.4 628.6 89.7 628.6H88.4 M77.6 628.6H76.3Q75.6 628.6 75.6 627.9V626.5' fill='none' stroke='#37474f' stroke-width='1.1'/><rect x='77.8' y='620' width='1' height='6.5' fill='#37474f'/><rect x='80' y='620' width='1' height='4.5' fill='#37474f'/><rect x='80' y='625.4' width='1' height='1.1' fill='#37474f'/><rect x='82' y='620' width='2' height='6.5' fill='#78909c'/><rect x='85' y='620' width='1' height='4.5' fill='#37474f'/><rect x='85' y='625.4' width='1' height='1.1' fill='#37474f'/><rect x='87.2' y='620' width='1' height='6.5' fill='#37474f'/><rect x='32.9' y='643.9' width='13.2' height='13.2' rx='1.8' fill='none' stroke='#263238' stroke-width='1.8'/><path d='M75.6 649.6V648.2Q75.6 647.5 76.3 647.5H77.6 M88.4 647.5H89.7Q90.4 647.5 90.4 648.2V649.6 M90.4 656.5V657.9Q90.4 658.6 89.7 658.6H88.4 M77.6 658.6H76.3Q75.6 658.6 75.6 657.9V656.5' fill='none' stroke='#37474f' stroke-width='1.1'/><rect x='77.8' y='650' width='1' height='6.5' fill='#37474f'/><rect x='80' y='650' width='1' height='4.5' fill='#37474f'/><rect x='80' y='655.4' width='1' height='1.1' fill='#37474f'/><rect x='82' y='650' width='2' height='6.5' fill='#78909c'/><rect x='85' y='650' width='1' height='4.5' fill='#37474f'/><rect x='85' y='655.4' width='1' height='1.1' fill='#37474f'/><rect x='87.2' y='650' width='1' height='6.5' fill='#37474f'/><rect x='32.9' y='673.9' width='13.2' height='13.2' rx='1.8' fill='none' stroke='#263238' stroke-width='1.8'/><path d='M75.6 679.6V678.2Q75.6 677.5 76.3 677.5H77.6 M88.4 677.5H89.7Q90.4 677.5 90.4 678.2V679.6 M90.4 686.5V687.9Q90.4 688.6 89.7 688.6H88.4 M77.6 688.6H76.3Q75.6 688.6 75.6 687.9V686.5' fill='none' stroke='#37474f' stroke-width='1.1'/><rect x='77.8' y='680' width='1' height='6.5' fill='#37474f'/><rect x='80' y='680' width='1' height='4.5' fill='#37474f'/><rect x='80' y='685.4' width='1' height='1.1' fill='#37474f'/><rect x='82' y='680' width='2' height='6.5' fill='#78909c'/><rect x='85' y='680' width='1' height='4.5' fill='#37474f'/><rect x='85' y='685.4' width='1' height='1.1' fill='#37474f'/><rect x='87.2' y='680' width='1' height='6.5' fill='#37474f'/><rect x='32.9' y='703.9' width='13.2' height='13.2' rx='1.8' fill='none' stroke='#263238' stroke-width='1.8'/><path d='M75.6 709.6V708.2Q75.6 707.5 76.3 707.5H77.6 M88.4 707.5H89.7Q90.4 707.5 90.4 708.2V709.6 M90.4 716.5V717.9Q90.4 718.6 89.7 718.6H88.4 M77.6 718.6H76.3Q75.6 718.6 75.6 717.9V716.5' fill='none' stroke='#37474f' stroke-width='1.1'/><rect x='77.8' y='710' width='1' height='6.5' fill='#37474f'/><rect x='80' y='710' width='1' height='4.5' fill='#37474f'/><rect x='80' y='715.4' width='1' height='1.1' fill='#37474f'/><rect x='82' y='710' width='2' height='6.5' fill='#78909c'/><rect x='85' y='710' width='1' height='4.5' fill='#37474f'/><rect x='85' y='715.4' width='1' height='1.1' fill='#37474f'/><rect x='87.2' y='710' width='1' height='6.5' fill='#37474f'/><rect x='32.9' y='733.9' width='13.2' height='13.2' rx='1.8' fill='none' stroke='#263238' stroke-width='1.8'/><path d='M75.6 739.6V738.2Q75.6 737.5 76.3 737.5H77.6 M88.4 737.5H89.7Q90.4 737.5 90.4 738.2V739.6 M90.4 746.5V747.9Q90.4 748.6 89.7 748.6H88.4 M77.6 748.6H76.3Q75.6 748.6 75.6 747.9V746.5' fill='none' stroke='#37474f' stroke-width='1.1'/><rect x='77.8' y='740' width='1' height='6.5' fill='#37474f'/><rect x='80' y='740' width='1' height='4.5' fill='#37474f'/><rect x='80' y='745.4' width='1' height='1.1' fill='#37474f'/><rect x='82' y='740' width='2' height='6.5' fill='#78909c'/><rect x='85' y='740' width='1' height='4.5' fill='#37474f'/><rect x='85' y='745.4' width='1' height='1.1' fill='#37474f'/><rect x='87.2' y='740' width='1' height='6.5' fill='#37474f'/><rect x='32.9' y='763.9' width='13.2' height='13.2' rx='1.8' fill='none' stroke='#263238' stroke-width='1.8'/><path d='M75.6 769.6V768.2Q75.6 767.5 76.3 767.5H77.6 M88.4 767.5H89.7Q90.4 767.5 90.4 768.2V769.6 M90.4 776.5V777.9Q90.4 778.6 89.7 778.6H88.4 M77.6 778.6H76.3Q75.6 778.6 75.6 777.9V776.5' fill='none' stroke='#37474f' stroke-width='1.1'/><rect x='77.8' y='770' width='1' height='6.5' fill='#37474f'/><rect x='80' y='770' width='1' height='4.5' fill='#37474f'/><rect x='80' y='775.4' width='1' height='1.1' fill='#37474f'/><rect x='82' y='770' width='2' height='6.5' fill='#78909c'/><rect x='85' y='770' width='1' height='4.5' fill='#37474f'/><rect x='85' y='775.4' width='1' height='1.1' fill='#37474f'/><rect x='87.2' y='770' width='1' height='6.5' fill='#37474f'/></svg>
<div class='r' style='left:57px;top:113px;width:166px;height:517px;background:#eceff1;box-shadow:1px 3px 8px rgba(0,0,0,0.4)'></div><div class='r' style='left:66px;top:162px;width:148px;height:1px;background:#cfd8dc'></div><div class='r' style='left:66px;top:211px;width:148px;height:1px;background:#cfd8dc'></div><div class='r' style='left:66px;top:328px;width:148px;height:1px;background:#cfd8dc'></div><div class='r' style='left:66px;top:377px;width:148px;height:1px;background:#cfd8dc'></div><div class='r' style='left:66px;top:454px;width:148px;height:32px;background:#168ac9'></div>
<div class='t' style='left:75.35px;top:131.00px;font-family:"Liberation Sans",sans-serif;font-size:15px;font-weight:400;color:#37474f;letter-spacing:-0.002px'>References</div><div class='t' style='left:75.35px;top:180.60px;font-family:"Liberation Sans",sans-serif;font-size:15px;font-weight:400;color:#37474f;letter-spacing:0.683px'>Submit</div><div class='t' style='left:75.35px;top:229.30px;font-family:"Liberation Sans",sans-serif;font-size:15px;font-weight:400;color:#37474f;letter-spacing:0.515px'>Add to workflow</div><div class='t' style='left:75.35px;top:263.40px;font-family:"Liberation Sans",sans-serif;font-size:15px;font-weight:400;color:#37474f;letter-spacing:0.188px'>Business action</div><div class='t' style='left:75.35px;top:297.10px;font-family:"Liberation Sans",sans-serif;font-size:15px;font-weight:400;color:#37474f;letter-spacing:0.214px'>Assign</div><div class='t' style='left:75.35px;top:346.20px;font-family:"Liberation Sans",sans-serif;font-size:15px;font-weight:400;color:#b0bec5;letter-spacing:0.621px'>Inspect</div><div class='t' style='left:75.35px;top:395.10px;font-family:"Liberation Sans",sans-serif;font-size:15px;font-weight:400;color:#37474f;letter-spacing:0.371px'>Approve</div><div class='t' style='left:75.35px;top:428.80px;font-family:"Liberation Sans",sans-serif;font-size:15px;font-weight:400;color:#37474f;letter-spacing:0.517px'>Import data...</div><div class='t' style='left:75.35px;top:463.30px;font-family:"Liberation Sans",sans-serif;font-size:15px;font-weight:400;color:#ffffff;letter-spacing:0.280px'>Export...</div><div class='t' style='left:75.35px;top:496.90px;font-family:"Liberation Sans",sans-serif;font-size:15px;font-weight:400;color:#37474f;letter-spacing:0.264px'>Add to collection...</div><div class='t' style='left:75.35px;top:530.80px;font-family:"Liberation Sans",sans-serif;font-size:15px;font-weight:400;color:#37474f;letter-spacing:0.543px'>Master product</div><div class='t' style='left:75.35px;top:564.90px;font-family:"Liberation Sans",sans-serif;font-size:15px;font-weight:400;color:#37474f;letter-spacing:0.171px'>Categorize...</div><div class='t' style='left:75.35px;top:599.00px;font-family:"Liberation Sans",sans-serif;font-size:15px;font-weight:400;color:#37474f;letter-spacing:-0.088px'>PDX channels</div>
<svg class='ov' width='1444' height='779' viewBox='0 0 1444 779'><path d='M197.6 134.39999999999998L202.2 138.2L197.6 142.0' fill='none' stroke='#37474f' stroke-width='1.2'/><path d='M197.6 232.7L202.2 236.5L197.6 240.3' fill='none' stroke='#37474f' stroke-width='1.2'/><path d='M197.6 266.8L202.2 270.6L197.6 274.40000000000003' fill='none' stroke='#37474f' stroke-width='1.2'/><path d='M197.6 300.5L202.2 304.3L197.6 308.1' fill='none' stroke='#37474f' stroke-width='1.2'/><path d='M197.6 534.2L202.2 538.0L197.6 541.8' fill='none' stroke='#37474f' stroke-width='1.2'/><path d='M197.6 602.4000000000001L202.2 606.2L197.6 610.0' fill='none' stroke='#37474f' stroke-width='1.2'/></svg>
<div class='r' style='left:150.5px;top:487px;width:50px;height:21px;box-sizing:border-box;border:1px solid #5a5a5a;border-radius:3px;background:#f5f6f7'></div>
<div class='t' style='left:153.96px;top:492.64px;font-family:"Liberation Sans",sans-serif;font-size:12px;font-weight:400;color:#000000;letter-spacing:-0.163px'>Export...</div>
<svg class='ov' width='1444' height='779' viewBox='0 0 1444 779'><path d='M149.3 468.2Q149.3 466.6 150.9 466.6Q152.5 466.6 152.5 468.2V474.3Q152.6 472.3 153.9 472.3Q155.2 472.3 155.3 473.9V475Q155.4 473.2 156.7 473.2Q158.1 473.2 158.2 474.8V475.8Q158.3 474 159.8 474Q161.3 474 161.3 475.6V482.5Q161.3 486 159.8 488Q158.5 489.3 155 489.3H152.5Q150 489.3 148.6 487.6L144.8 482.3Q144 481 145 480.1Q146 479.2 147.2 480.3L149.3 482.4Z' fill='#fff' stroke='#000' stroke-width='1' stroke-linejoin='round'/><path d='M152.5 474.5V481 M155.3 475V481 M158.2 476V481' stroke='#000' stroke-width='.9'/></svg>
<div class='r' style='left:0;top:0;width:1444px;height:779px;box-sizing:border-box;border:3px solid #a4a4a4;background:transparent'></div>
</body></html>
